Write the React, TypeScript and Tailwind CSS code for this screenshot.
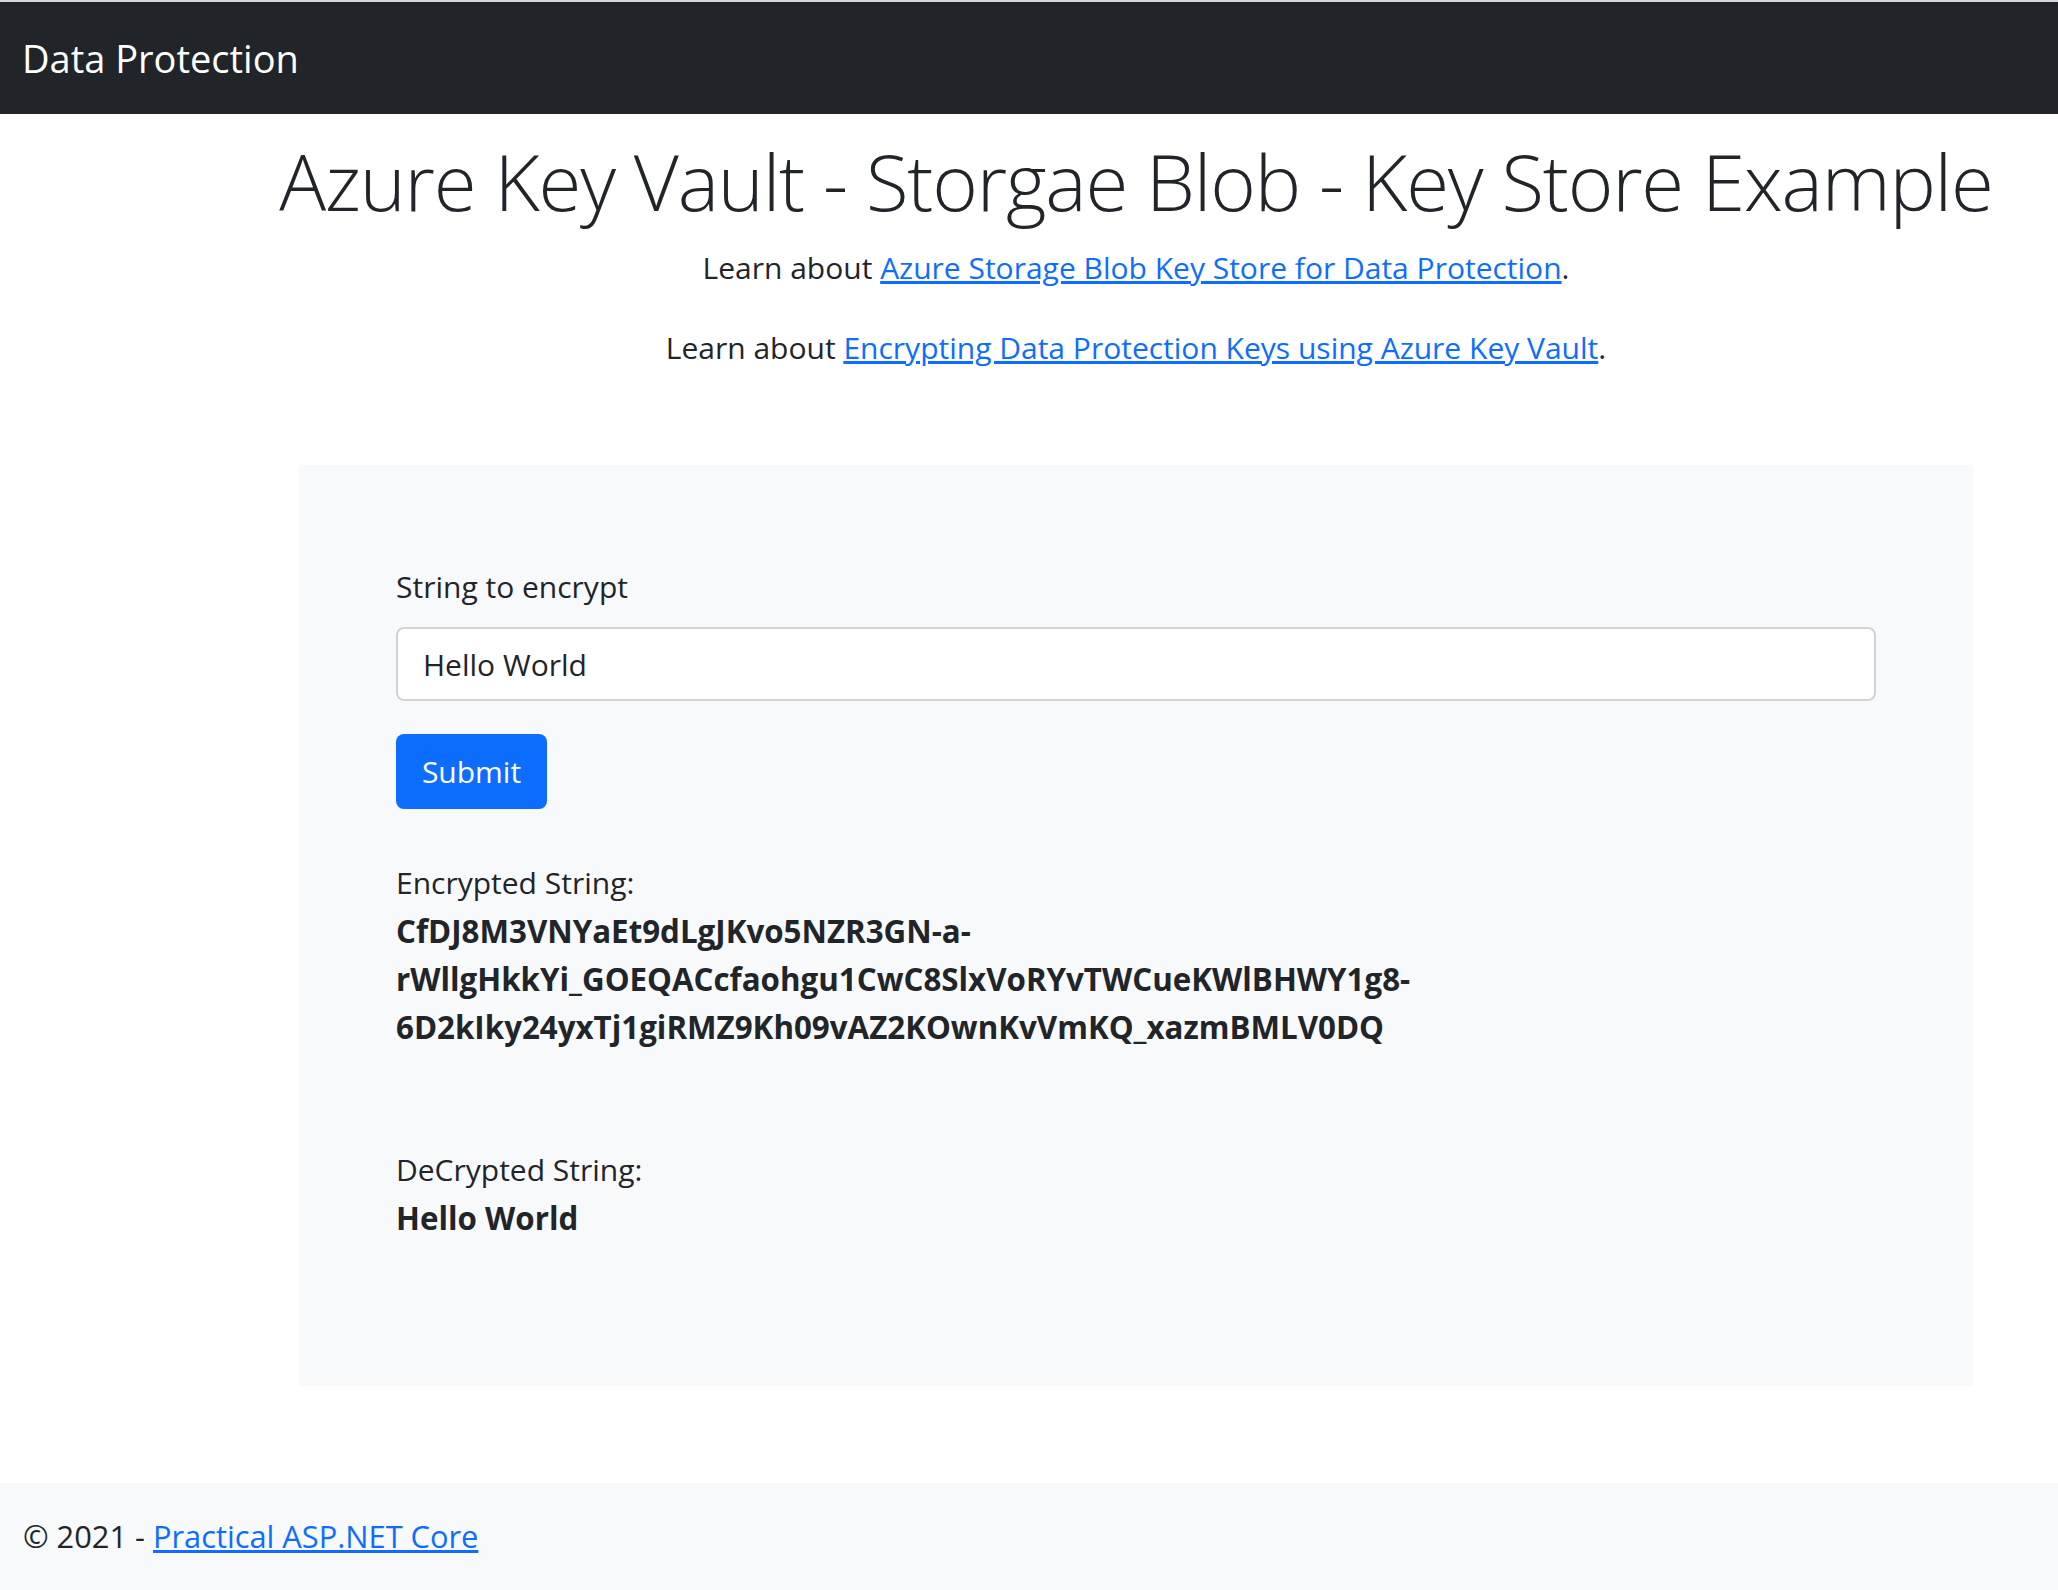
export default function App() {
  return (
    <div className="min-h-[1590px] flex flex-col bg-white text-[#212529] font-['Open_Sans',sans-serif]">
      <div className="h-[2px] bg-[#d6d6d6]" />
      <nav className="h-[112px] bg-[#212529] flex items-center pl-[22px]">
        <span className="text-[38px] text-white">Data Protection</span>
      </nav>

      <main className="pl-[278px] pr-[64px]">
        <h1 className="mt-[18px] text-center text-[78px] tracking-[-1.2px] font-light leading-[98px] whitespace-nowrap">
          Azure Key Vault - Storgae Blob - Key Store Example
        </h1>
        <p className="mt-[14px] text-center text-[30px] leading-[48px]">
          Learn about{" "}
          <a href="#" className="text-[#0d6efd] underline">
            Azure Storage Blob Key Store for Data Protection
          </a>
          .
        </p>
        <p className="mt-[32px] text-center text-[30px] leading-[48px]">
          Learn about{" "}
          <a href="#" className="text-[#0d6efd] underline">
            Encrypting Data Protection Keys using Azure Key Vault
          </a>
          .
        </p>

        <div className="mx-[21px] mt-[93px] mb-[97px] h-[921px] bg-[#f8f9fa] px-[97px] pt-[98px] text-[30px] leading-[48px]">
          <label className="block">String to encrypt</label>
          <input
            readOnly
            value="Hello World"
            className="mt-[16px] block w-full h-[74px] rounded-[8px] border-2 border-[#ced4da] bg-white px-[25px] text-[30px] text-[#212529] outline-none"
          />
          <button className="mt-[33px] w-[151px] h-[75px] rounded-[8px] bg-[#0d6efd] text-white text-[30px]">
            Submit
          </button>

          <div className="mt-[50px]">Encrypted String:</div>
          <div className="font-bold text-[31.3px] max-w-[1150px]">
            CfDJ8M3VNYaEt9dLgJKvo5NZR3GN-a-rWllgHkkYi_GOEQACcfaohgu1CwC8SlxVoRYvTWCueKWlBHWY1g8-6D2kIky24yxTj1giRMZ9Kh09vAZ2KOwnKvVmKQ_xazmBMLV0DQ
          </div>

          <div className="mt-[95px]">DeCrypted String:</div>
          <div className="font-bold text-[31.3px]">Hello World</div>
        </div>
      </main>

      <footer className="h-[107px] bg-[#f8f9fa] flex items-center pl-[23px] text-[30.8px]">
        <span>
          © 2021 -{" "}
          <a href="#" className="text-[#0d6efd] underline">
            Practical ASP.NET Core
          </a>
        </span>
      </footer>
    </div>
  );
}
